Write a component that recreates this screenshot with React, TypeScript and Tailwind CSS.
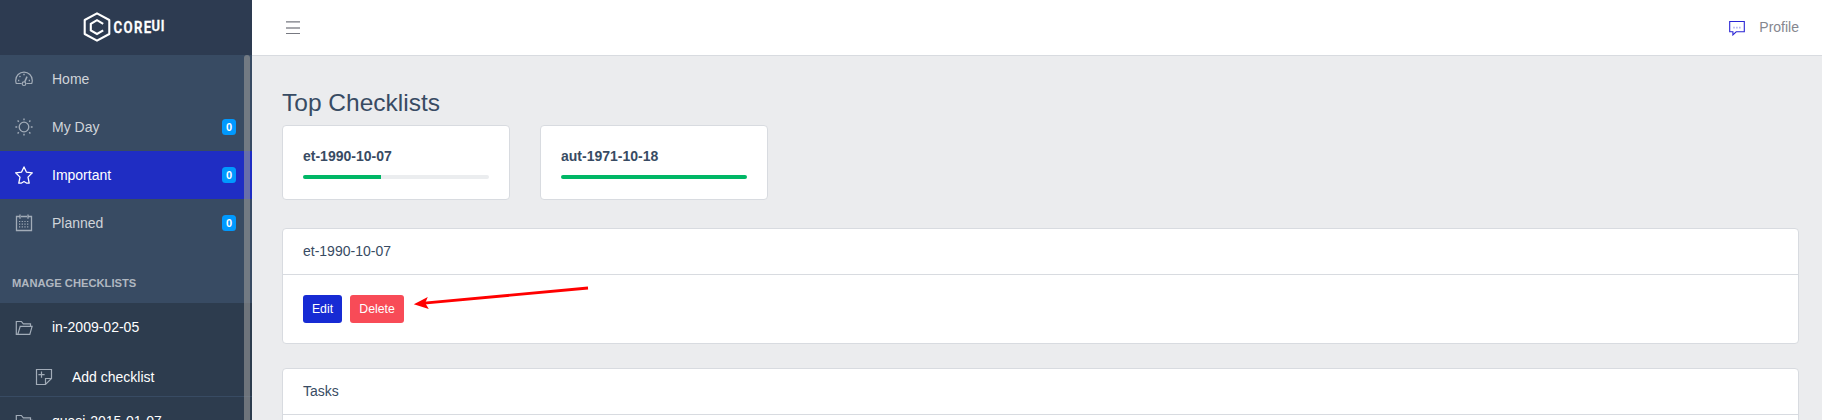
import type { ReactNode } from "react";

type IconProps = { className?: string };

function Svg({ className = "", children }: { className?: string; children: ReactNode }) {
  return (
    <svg viewBox="0 0 18 18" width="18" height="18" fill="none" stroke="currentColor" strokeWidth="1.2" className={"shrink-0 " + className}>
      {children}
    </svg>
  );
}

const Speedometer = (p: IconProps) => (
  <Svg {...p}>
    <path d="M6.6 13.5H1.3C.9 12.4.7 11.4.7 10.4a8.3 8.3 0 0 1 16.6 0c0 1-.2 2-.6 3.1h-5.3" />
    <circle cx="9" cy="13.7" r="1.8" />
    <path strokeWidth="1.5" d="M9.7 11.9 12 6.6" />
    <path strokeWidth="1.4" d="M3 10.5h1.3M4.5 6l.9.9M8.3 4.5h1.4M13.7 10.5H15" />
  </Svg>
);
const Sun = (p: IconProps) => (
  <Svg {...p}>
    <circle cx="9" cy="9" r="4.8" strokeWidth="1.3" />
    <path strokeWidth="1.4" d="M9 .4v1.8M9 15.8v1.8M.4 9h1.8M15.8 9h1.8M2.6 2.6l1.2 1.2M14.2 14.2l1.2 1.2M2.6 15.4l1.2-1.2M14.2 3.8l1.2-1.2" />
  </Svg>
);
const Star = (p: IconProps) => (
  <Svg {...p}>
    <path strokeWidth="1.3" strokeLinejoin="round" d="m9 .9 2.4 5.2 5.9.7-4.3 4.3 1.2 6.1h-2.4L9 15.5l-2.8 1.7H3.8L5 11.1.7 6.8l5.9-.7z" />
  </Svg>
);
const Calendar = (p: IconProps) => (
  <Svg {...p}>
    <path strokeWidth="1.3" d="M4.6 2.5H1.5v14h15v-14h-3.1M6 2.5h6M5 .4v4.4M13 .4v4.4" />
    <path strokeWidth="1.2" strokeDasharray="1.2 1.5" d="M4 7.5h10.4M4 10.2h10.4M4 12.9h10.4" />
  </Svg>
);
const Folder = (p: IconProps) => (
  <Svg {...p}>
    <path d="M3 15.4H1.3V2.5h5.1l1.9 2.4h7.2v2.4M2.8 15.4h12l2.3-8.1H5.2z" />
  </Svg>
);
const NoteAdd = (p: IconProps) => (
  <Svg {...p}>
    <path d="M16.5 1.5H1.5v15h9l6-6zM10.5 16.3v-5.8h5.8M6.5 3.6v6.2M3.4 6.7h6.2" />
  </Svg>
);

function Logo() {
  return (
    <svg width="84" height="30" viewBox="0 0 84 30" className="mt-[-1px] ml-[-2px]" fill="none" stroke="#fff">
      <path strokeWidth="2.1" strokeLinejoin="round" d="M14 1.3 26.3 8v14L14 28.7 1.7 22V8z" />
      <path strokeWidth="2.1" d="M20.2 11.8 14 8.2 7.8 11.8v6.6l6.2 3.6 6.2-3.6" />
      <g fill="#fff" strokeWidth=".35" fontFamily="Roboto, sans-serif" fontWeight="600">
        <text transform="translate(30.6 20.8) scale(.8 1)" fontSize="16.5" textLength="47" lengthAdjust="spacing">CORE</text>
        <text transform="translate(68.6 18.8) scale(.92 1)" fontSize="14" textLength="14" lengthAdjust="spacing">UI</text>
      </g>
    </svg>
  );
}

function NavItem({ icon, label, badge, active }: { icon: ReactNode; label: string; badge?: number; active?: boolean }) {
  return (
    <a className={"flex h-12 shrink-0 items-center pr-4 pl-[15px] " + (active ? "bg-[#1f2dc3] text-white" : "text-[#d0d4d9]")}>
      <span className={active ? "text-white" : "text-[#a2acb8]"}>{icon}</span>
      <span className="ml-[19px] flex-1">{label}</span>
      {badge !== undefined && (
        <span className="flex h-4 w-[14px] items-center justify-center rounded-[3.5px] bg-[#0099ff] text-[11px] font-bold text-white">{badge}</span>
      )}
    </a>
  );
}

function ChecklistGroup({ name, children }: { name: string; children?: ReactNode }) {
  return (
    <div className="h-[94px] shrink-0 border-b border-[#384b63] bg-[#2d3c4e] text-white">
      <div className="flex h-12 items-center pl-[15px]">
        <Folder className="mt-px text-[#a2acb8]" />
        <span className="ml-[19px]">{name}</span>
      </div>
      {children}
    </div>
  );
}

function TopCard({ name, percent }: { name: string; percent: number }) {
  return (
    <div className="h-[75px] w-[228px] rounded-[4px] border border-[#d8dbe0] bg-white px-5 pt-5">
      <div className="leading-[21px] font-bold">{name}</div>
      <div className="mt-2 h-1 overflow-hidden rounded-[4px] bg-[#ebedef]">
        <div className="h-full bg-[#00b766]" style={{ width: percent + "%" }} />
      </div>
    </div>
  );
}

function Panel({ title, children }: { title: string; children?: ReactNode }) {
  return (
    <section className="mb-6 h-[116px] shrink-0 rounded-[4px] border border-[#d8dbe0] bg-white">
      <div className="h-[46px] border-b border-[#d8dbe0] px-5 pt-3 leading-[21px]">{title}</div>
      <div className="p-5">{children}</div>
    </section>
  );
}

export default function App() {
  return (
    <div className="relative flex h-[420px] w-[1822px] overflow-hidden bg-[#ebecee] font-['Liberation_Sans',Arial,sans-serif] text-[14px] text-[#384b63]">
      <aside className="relative flex w-[252px] shrink-0 flex-col overflow-hidden bg-[#384b63]">
        <div className="flex h-[55px] shrink-0 items-center justify-center bg-[#2d3b51]">
          <Logo />
        </div>
        <NavItem icon={<Speedometer />} label="Home" />
        <NavItem icon={<Sun />} label="My Day" badge={0} />
        <NavItem icon={<Star />} label="Important" badge={0} active />
        <NavItem icon={<Calendar />} label="Planned" badge={0} />
        <div className="h-14 shrink-0 pt-7 pl-3 text-[11.2px] leading-[17px] font-bold text-[#b0b7c0]">MANAGE CHECKLISTS</div>
        <ChecklistGroup name="in-2009-02-05">
          <div className="flex items-center pt-[17px] pl-[35px]">
            <NoteAdd className="text-[#a2acb8]" />
            <span className="ml-[19px] leading-[18px]">Add checklist</span>
          </div>
        </ChecklistGroup>
        <ChecklistGroup name="quasi-2015-01-07" />
        <div className="absolute top-[55px] right-0.5 h-[400px] w-1.5 rounded-full bg-[#999]/60" />
      </aside>
      <div className="flex min-w-0 flex-1 flex-col">
        <header className="flex h-14 shrink-0 items-center justify-between border-b border-[#d8dbe0] bg-white pr-[23px] pl-[34px] text-[#85878f]">
          <svg width="14" height="14" viewBox="0 0 14 14" stroke="#777981" className="mt-px">
            <path strokeWidth="1.2" d="M0 .9h14M0 12.5h14" />
            <path strokeWidth="1.3" d="M0 7h14" />
          </svg>
          <div className="flex items-center">
            <svg width="16" height="16" viewBox="0 0 16 16" fill="none" stroke="#2a25d4" strokeWidth="1.1">
              <path d="M.7 1.5h14.6v10.3H7.2l-3.3 3.1v-3.1H.7z" />
              <path strokeOpacity=".35" strokeWidth="1.6" strokeDasharray="1.6 1.3" d="M4.2 7.6h8" />
            </svg>
            <span className="ml-[14px]">Profile</span>
          </div>
        </header>
        <main className="flex flex-col pr-[23px] pl-[30px]">
          <h1 className="mt-8 mb-[7px] text-[24.5px] leading-[30px]">Top Checklists</h1>
          <div className="mb-7 flex gap-[30px]">
            <TopCard name="et-1990-10-07" percent={42} />
            <TopCard name="aut-1971-10-18" percent={100} />
          </div>
          <Panel title="et-1990-10-07">
            <div className="flex gap-2 text-[12.25px] text-white">
              <button className="h-7 w-[39px] rounded-[3px] bg-[#172bd4]">Edit</button>
              <button className="h-7 w-[54px] rounded-[3px] bg-[#f84b57]">Delete</button>
            </div>
          </Panel>
          <Panel title="Tasks" />
        </main>
      </div>
      <svg className="absolute top-[280px] left-[410px]" width="182" height="32" viewBox="0 0 182 32">
        <path d="M178 8 14 23.2" stroke="#f00" strokeWidth="2.8" />
        <path d="M3.8 24.3 17.8 17l-2.6 6.1 3.6 6z" fill="#f00" />
      </svg>
    </div>
  );
}
